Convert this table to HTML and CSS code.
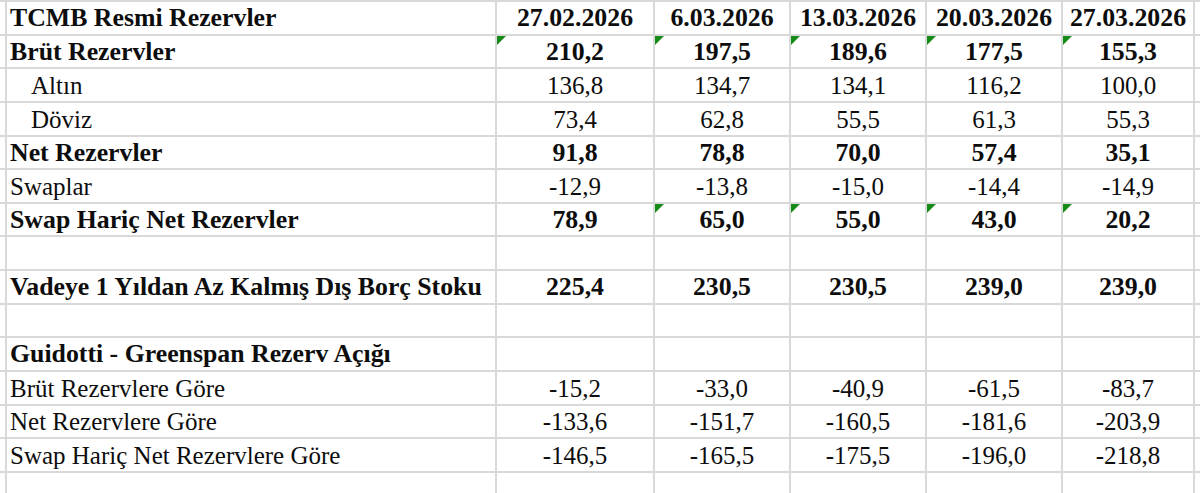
FILE: index.html
```html
<!DOCTYPE html>
<html>
<head>
<meta charset="utf-8">
<title>TCMB Resmi Rezervler</title>
<link rel="stylesheet" href="styles.css">
</head>
<body>
<div class="sheet">
  <div class="row bold">
    <div class="c"></div><div class="c label">TCMB Resmi Rezervler</div>
    <div class="c num">27.02.2026</div><div class="c num">6.03.2026</div><div class="c num">13.03.2026</div><div class="c num">20.03.2026</div><div class="c num">27.03.2026</div><div class="c"></div>
  </div>
  <div class="row bold">
    <div class="c"></div><div class="c label">Brüt Rezervler</div>
    <div class="c num note">210,2</div><div class="c num note">197,5</div><div class="c num note">189,6</div><div class="c num note">177,5</div><div class="c num note">155,3</div><div class="c"></div>
  </div>
  <div class="row">
    <div class="c"></div><div class="c label indent">Altın</div>
    <div class="c num">136,8</div><div class="c num">134,7</div><div class="c num">134,1</div><div class="c num">116,2</div><div class="c num">100,0</div><div class="c"></div>
  </div>
  <div class="row">
    <div class="c"></div><div class="c label indent">Döviz</div>
    <div class="c num">73,4</div><div class="c num">62,8</div><div class="c num">55,5</div><div class="c num">61,3</div><div class="c num">55,3</div><div class="c"></div>
  </div>
  <div class="row bold">
    <div class="c"></div><div class="c label">Net Rezervler</div>
    <div class="c num">91,8</div><div class="c num">78,8</div><div class="c num">70,0</div><div class="c num">57,4</div><div class="c num">35,1</div><div class="c"></div>
  </div>
  <div class="row">
    <div class="c"></div><div class="c label">Swaplar</div>
    <div class="c num">-12,9</div><div class="c num">-13,8</div><div class="c num">-15,0</div><div class="c num">-14,4</div><div class="c num">-14,9</div><div class="c"></div>
  </div>
  <div class="row bold">
    <div class="c"></div><div class="c label">Swap Hariç Net Rezervler</div>
    <div class="c num">78,9</div><div class="c num note">65,0</div><div class="c num note">55,0</div><div class="c num note">43,0</div><div class="c num note">20,2</div><div class="c"></div>
  </div>
  <div class="row">
    <div class="c"></div><div class="c"></div><div class="c"></div><div class="c"></div><div class="c"></div><div class="c"></div><div class="c"></div><div class="c"></div>
  </div>
  <div class="row bold">
    <div class="c"></div><div class="c label">Vadeye 1 Yıldan Az Kalmış Dış Borç Stoku</div>
    <div class="c num">225,4</div><div class="c num">230,5</div><div class="c num">230,5</div><div class="c num">239,0</div><div class="c num">239,0</div><div class="c"></div>
  </div>
  <div class="row">
    <div class="c"></div><div class="c"></div><div class="c"></div><div class="c"></div><div class="c"></div><div class="c"></div><div class="c"></div><div class="c"></div>
  </div>
  <div class="row bold">
    <div class="c"></div><div class="c label">Guidotti - Greenspan Rezerv Açığı</div>
    <div class="c"></div><div class="c"></div><div class="c"></div><div class="c"></div><div class="c"></div><div class="c"></div>
  </div>
  <div class="row">
    <div class="c"></div><div class="c label">Brüt Rezervlere Göre</div>
    <div class="c num">-15,2</div><div class="c num">-33,0</div><div class="c num">-40,9</div><div class="c num">-61,5</div><div class="c num">-83,7</div><div class="c"></div>
  </div>
  <div class="row">
    <div class="c"></div><div class="c label">Net Rezervlere Göre</div>
    <div class="c num">-133,6</div><div class="c num">-151,7</div><div class="c num">-160,5</div><div class="c num">-181,6</div><div class="c num">-203,9</div><div class="c"></div>
  </div>
  <div class="row">
    <div class="c"></div><div class="c label">Swap Hariç Net Rezervlere Göre</div>
    <div class="c num">-146,5</div><div class="c num">-165,5</div><div class="c num">-175,5</div><div class="c num">-196,0</div><div class="c num">-218,8</div><div class="c"></div>
  </div>
  <div class="row">
    <div class="c"></div><div class="c"></div><div class="c"></div><div class="c"></div><div class="c"></div><div class="c"></div><div class="c"></div><div class="c"></div>
  </div>
</div>
</body>
</html>
```

FILE: styles.css
```css
html, body {
  margin: 0;
  padding: 0;
  background: #ffffff;
}
body {
  width: 1200px;
  height: 493px;
  overflow: hidden;
  color: #0d0d0d;
  font-family: "Liberation Serif", "Times New Roman", serif;
}
.sheet {
  display: flex;
  flex-direction: column;
  gap: 2px;
  padding-top: 2px;
  background: #d9d9d9;
  height: 493px;
  box-sizing: border-box;
}
.row {
  display: grid;
  grid-template-columns: 5px 488px 156px 134px 134px 134px 130px 1fr;
  column-gap: 2px;
  height: 31.64px;
  flex: none;
}
.row:last-child {
  flex: 1 1 auto;
}
.c {
  font-family: "Liberation Serif", "Times New Roman", serif;
  font-size: 25px;
  background: #ffffff;
  position: relative;
  display: flex;
  align-items: flex-end;
  padding-bottom: 1px;
  box-sizing: border-box;
  white-space: nowrap;
  line-height: normal;
}
.bold .c {
  font-weight: bold;
  font-size: 25.8px;
  padding-bottom: 0.5px;
}
.row:last-child .c {
  padding-bottom: 0;
}
.label {
  padding-left: 3px;
}
.label.indent {
  padding-left: 24px;
}
.num {
  justify-content: center;
}
.note::before {
  content: "";
  position: absolute;
  left: 0;
  top: 0;
  width: 0;
  height: 0;
  border-top: 9px solid #178b17;
  border-right: 9px solid transparent;
}
```
